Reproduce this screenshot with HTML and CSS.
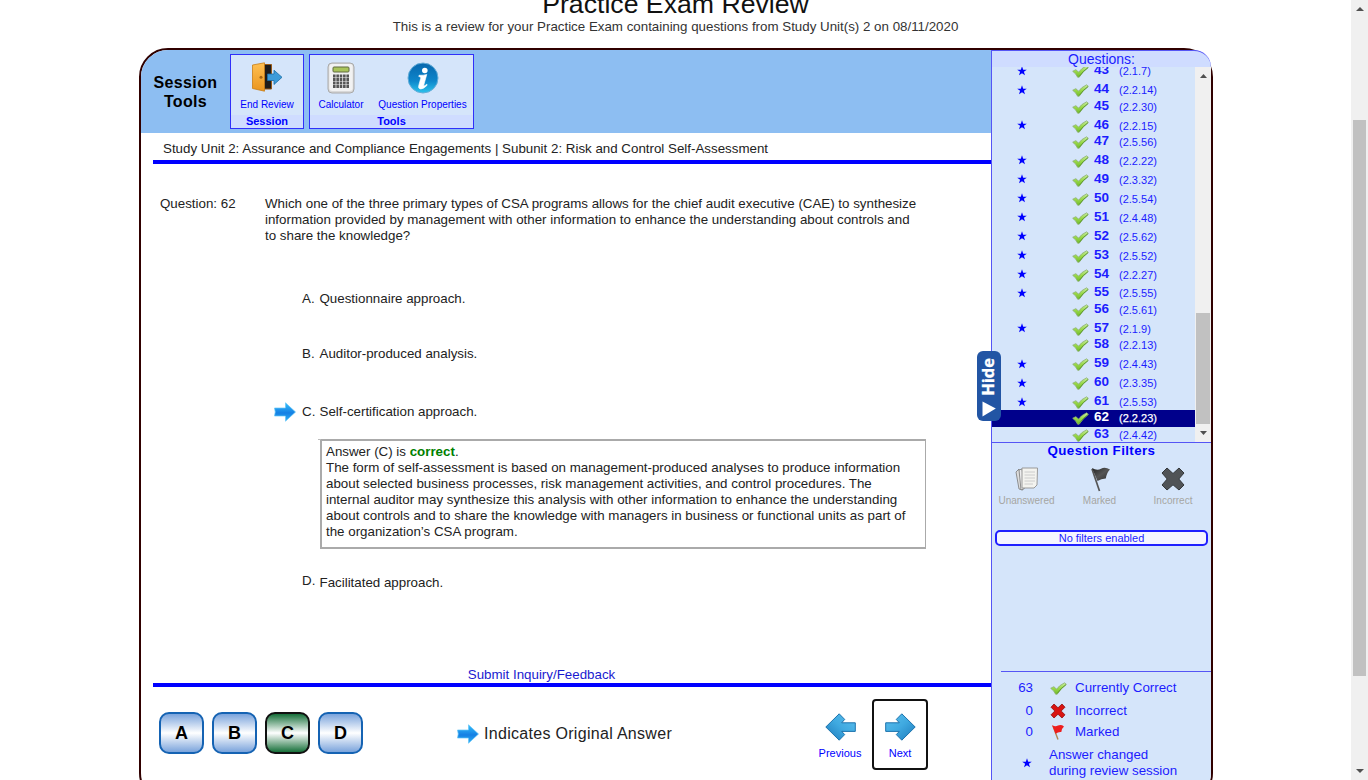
FILE: index.html
```html
<!DOCTYPE html>
<html lang="en">
<head>
<meta charset="utf-8">
<title>Practice Exam Review</title>
<link rel="stylesheet" href="styles.css">
</head>
<body>
<svg class="defs" width="0" height="0" aria-hidden="true">
  <defs>
    <linearGradient id="green" x1="0" y1="0" x2="0" y2="1"><stop offset="0" stop-color="#c8ecA0"/><stop offset=".5" stop-color="#98d848"/><stop offset="1" stop-color="#72bb2c"/></linearGradient>
    <linearGradient id="sky" x1="0" y1="0" x2="0" y2="1"><stop offset="0" stop-color="#35c0fb"/><stop offset=".55" stop-color="#1580e4"/><stop offset="1" stop-color="#2eb0f5"/></linearGradient>
    <linearGradient id="nav" x1="0" y1="0" x2="1" y2="1"><stop offset="0" stop-color="#5cc0ee"/><stop offset=".5" stop-color="#3fa9e0"/><stop offset="1" stop-color="#1c79ba"/></linearGradient>
    <linearGradient id="door" x1="0" y1="0" x2="0" y2="1"><stop offset="0" stop-color="#ffc052"/><stop offset="1" stop-color="#ea951e"/></linearGradient>
    <linearGradient id="info" x1="0" y1="0" x2="0" y2="1"><stop offset="0" stop-color="#0867ad"/><stop offset=".6" stop-color="#0d86cb"/><stop offset="1" stop-color="#2cc3ec"/></linearGradient>
    <linearGradient id="dark" x1="0" y1="0" x2="1" y2="1"><stop offset="0" stop-color="#222"/><stop offset=".5" stop-color="#555"/><stop offset="1" stop-color="#2c2c2c"/></linearGradient>
  </defs>
  <symbol id="check" viewBox="0 0 17 13"><path d="M.7 6.3 3.7 4.7Q5.2 5.4 6.6 7.2 9.4 3.1 14.6.8L16.4 2.4Q11 6.3 7.2 12.2L5.6 12.2Q4 8.5.7 6.3Z" fill="url(#green)" stroke="#8bae72" stroke-width=".8"/><path d="M7.3 11.4Q11 6 16 2.6" stroke="#4d8e20" fill="none" stroke-width=".7"/></symbol>
  <symbol id="star" viewBox="0 0 10 10"><path d="M5 .3 6.2 3.7H9.8L6.9 5.8 8 9.3 5 7.2 2 9.3 3.1 5.8.2 3.7H3.8Z" fill="#00f"/></symbol>
  <symbol id="pointer" viewBox="0 0 22 20"><path d="M.5 6H11.5V.8L21.5 10 11.5 19.2V14H.5Q2 10 .5 6Z" fill="url(#sky)" stroke="#65c6f8" stroke-width=".7"/></symbol>
  <symbol id="arrow" viewBox="0 0 31 28"><path d="M.7 9.8H14.3L11.3 6.4 16.8.8 30.2 14 16.8 27.2 11.3 21.6 14.3 18.4H.7Z" fill="url(#nav)" stroke="#1d73ad"/></symbol>
</svg>
<div class="page">
  <main class="content">
    <h1 class="title">Practice Exam Review</h1>
    <p class="subtitle">This is a review for your Practice Exam containing questions from Study Unit(s) 2 on 08/11/2020</p>
    <div class="frame">
      <section class="exam">
        <header class="toolbar">
          <div class="toolbar-name">Session<br>Tools</div>
          <div class="group group-session">
            <div class="tools">
              <div class="tool">
                <svg width="32" height="30" viewBox="0 0 32 30"><path d="M12 2.5H20.5V27H12Z" fill="#1e1c1b" stroke="#9a5b18"/><path d="M1.5 3 13.5.8V29.2L1.5 26.5Z" fill="url(#door)" stroke="#c87d16" stroke-width=".8"/><circle cx="10" cy="15.3" r="1.5" fill="#a26415"/><path d="M16.5 12H23V8.2L31 15.3 23 22.5V18.5H16.5Z" fill="#3c9bd9" stroke="#1c6da4" stroke-width=".8"/></svg>
                <span>End Review</span>
              </div>
            </div>
            <div class="group-name">Session</div>
          </div>
          <div class="group group-tools">
            <div class="tools">
              <div class="tool tool-calc">
                <svg width="28" height="32" viewBox="0 0 28 32"><rect x="1" y="1" width="26" height="30" rx="4" fill="#d8d8d8" stroke="#aaa"/><rect x="2.3" y="2" width="23.4" height="27" rx="3" fill="#f2f2f2"/><rect x="6" y="5" width="16" height="5" rx="1" fill="#a9c45b" stroke="#606b40"/><path d="M6 14H22M6 17.5H22M6 21H22M6 24.5H22" stroke="#555" stroke-width="2.8" stroke-dasharray="2.6 .75"/></svg>
                <span>Calculator</span>
              </div>
              <div class="tool tool-info">
                <svg width="32" height="32" viewBox="0 0 32 32"><circle cx="16" cy="16" r="15" fill="url(#info)" stroke="#65add8"/><circle cx="17.8" cy="8.5" r="2.8" fill="#fff"/><path d="M12 13.3Q16.5 13.5 19.8 12.4L16.8 23Q16.5 25 19.7 22.3L20.3 23.1Q16.5 27.2 13.7 27 10.9 26.7 11.7 23.7L13.7 16.3Q14.2 14.5 11.8 14.5Z" fill="#fff" stroke="#fff" stroke-width=".6"/></svg>
                <span>Question Properties</span>
              </div>
            </div>
            <div class="group-name">Tools</div>
          </div>
        </header>
        <div class="unit">Study Unit 2: Assurance and Compliance Engagements | Subunit 2: Risk and Control Self-Assessment</div>
        <div class="question">
          <div class="question-no">Question: 62</div>
          <div class="question-text">Which one of the three primary types of CSA programs allows for the chief audit executive (CAE) to synthesize<br>information provided by management with other information to enhance the understanding about controls and<br>to share the knowledge?</div>
        </div>
        <div class="answers">
          <div class="answer a"><i></i><span>A.</span><span>Questionnaire approach.</span></div>
          <div class="answer b"><i></i><span>B.</span><span>Auditor-produced analysis.</span></div>
          <div class="answer c"><svg width="22" height="20"><use href="#pointer"/></svg><span>C.</span><span>Self-certification approach.</span></div>
          <div class="explain">Answer (C) is <b>correct</b>.<br>The form of self-assessment is based on management-produced analyses to produce information<br>about selected business processes, risk management activities, and control procedures. The<br>internal auditor may synthesize this analysis with other information to enhance the understanding<br>about controls and to share the knowledge with managers in business or functional units as part of<br>the organization’s CSA program.</div>
          <div class="answer d"><i></i><span class="letter-d">D.</span><span>Facilitated approach.</span></div>
        </div>
        <div class="feedback"><a>Submit Inquiry/Feedback</a></div>
        <footer class="footer">
          <div class="choices"><div class="choice">A</div><div class="choice">B</div><div class="choice right">C</div><div class="choice">D</div></div>
          <div class="legend-answer"><svg width="22" height="20"><use href="#pointer"/></svg><span>Indicates Original Answer</span></div>
          <div class="nav"><div class="nav-item"><svg class="back" width="31" height="28"><use href="#arrow"/></svg><span>Previous</span></div><div class="nav-item next"><svg width="31" height="28"><use href="#arrow"/></svg><span>Next</span></div></div>
        </footer>
      </section>
      <aside class="side">
        <div class="side-head">Questions:</div>
        <div class="list">
          <div class="rows">
            <div class="row starred"><svg class="s"><use href="#star"/></svg><svg class="k"><use href="#check"/></svg><b>43</b><span>(2.1.7)</span></div>
            <div class="row starred"><svg class="s"><use href="#star"/></svg><svg class="k"><use href="#check"/></svg><b>44</b><span>(2.2.14)</span></div>
            <div class="row"><i></i><svg class="k"><use href="#check"/></svg><b>45</b><span>(2.2.30)</span></div>
            <div class="row starred"><svg class="s"><use href="#star"/></svg><svg class="k"><use href="#check"/></svg><b>46</b><span>(2.2.15)</span></div>
            <div class="row"><i></i><svg class="k"><use href="#check"/></svg><b>47</b><span>(2.5.56)</span></div>
            <div class="row starred"><svg class="s"><use href="#star"/></svg><svg class="k"><use href="#check"/></svg><b>48</b><span>(2.2.22)</span></div>
            <div class="row starred"><svg class="s"><use href="#star"/></svg><svg class="k"><use href="#check"/></svg><b>49</b><span>(2.3.32)</span></div>
            <div class="row starred"><svg class="s"><use href="#star"/></svg><svg class="k"><use href="#check"/></svg><b>50</b><span>(2.5.54)</span></div>
            <div class="row starred"><svg class="s"><use href="#star"/></svg><svg class="k"><use href="#check"/></svg><b>51</b><span>(2.4.48)</span></div>
            <div class="row starred"><svg class="s"><use href="#star"/></svg><svg class="k"><use href="#check"/></svg><b>52</b><span>(2.5.62)</span></div>
            <div class="row starred"><svg class="s"><use href="#star"/></svg><svg class="k"><use href="#check"/></svg><b>53</b><span>(2.5.52)</span></div>
            <div class="row starred"><svg class="s"><use href="#star"/></svg><svg class="k"><use href="#check"/></svg><b>54</b><span>(2.2.27)</span></div>
            <div class="row starred"><svg class="s"><use href="#star"/></svg><svg class="k"><use href="#check"/></svg><b>55</b><span>(2.5.55)</span></div>
            <div class="row"><i></i><svg class="k"><use href="#check"/></svg><b>56</b><span>(2.5.61)</span></div>
            <div class="row starred"><svg class="s"><use href="#star"/></svg><svg class="k"><use href="#check"/></svg><b>57</b><span>(2.1.9)</span></div>
            <div class="row"><i></i><svg class="k"><use href="#check"/></svg><b>58</b><span>(2.2.13)</span></div>
            <div class="row starred"><svg class="s"><use href="#star"/></svg><svg class="k"><use href="#check"/></svg><b>59</b><span>(2.4.43)</span></div>
            <div class="row starred"><svg class="s"><use href="#star"/></svg><svg class="k"><use href="#check"/></svg><b>60</b><span>(2.3.35)</span></div>
            <div class="row starred"><svg class="s"><use href="#star"/></svg><svg class="k"><use href="#check"/></svg><b>61</b><span>(2.5.53)</span></div>
            <div class="row current"><i></i><svg class="k"><use href="#check"/></svg><b>62</b><span>(2.2.23)</span></div>
            <div class="row"><i></i><svg class="k"><use href="#check"/></svg><b>63</b><span>(2.4.42)</span></div>
          </div>
          <div class="bar bar-list"><svg width="7" height="4"><path d="M3.5 0 7 4H0Z" fill="#505050"/></svg><div class="thumb"></div><svg width="7" height="4"><path d="M0 0H7L3.5 4Z" fill="#505050"/></svg></div>
        </div>
        <div class="filters">
          <div class="filters-title">Question Filters</div>
          <div class="filter-row">
            <div class="filter"><svg width="24" height="26" viewBox="0 0 24 26"><path d="M1 6 4 3 8 24 4 23Z" fill="#ddd" stroke="#777" stroke-width=".8"/><path d="M4 4 7 3 10 22 6 24Z" fill="#eee" stroke="#777" stroke-width=".8"/><path d="M7 2H22.5L22 19 19 22H7Z" fill="#f3f3ef" stroke="#999"/><path d="M9.5 6H20M9.5 9H20M9.5 12H20M9.5 15H20M9.5 18H18" stroke="#ccc"/></svg><span>Unanswered</span></div>
            <div class="filter"><svg width="24" height="26" viewBox="0 0 24 26"><path d="M4 3 11.5 25" stroke="#555" stroke-width="1.7"/><path d="M4 2Q9 5 13 2.8T22 3.5Q19 6 17.8 12.5 13.5 12.4 9.5 15Z" fill="url(#dark)"/></svg><span>Marked</span></div>
            <div class="filter"><svg width="24" height="26" viewBox="0 0 24 26"><path d="M6 2 12 7.5 18 2 23 7 17.8 13 23 19 18 24 12 18.8 6 24 1 19 6.2 13 1 7Z" fill="#505356" stroke="#33373a"/></svg><span>Incorrect</span></div>
          </div>
          <div class="filter-state">No filters enabled</div>
        </div>
        <div class="legend">
          <div class="legend-row l1"><em>63</em><svg class="k"><use href="#check"/></svg><span>Currently Correct</span></div>
          <div class="legend-row l2"><em>0</em><svg width="16" height="16" viewBox="0 0 16 16"><path d="M4 1 8 4.8 12 1 15 4.2 11.2 8 15 11.8 12 15 8 11.2 4 15 1 11.8 4.8 8 1 4.2Z" fill="#d91412" stroke="#8f1010" stroke-width=".8"/></svg><span>Incorrect</span></div>
          <div class="legend-row l3"><em>0</em><svg width="16" height="16" viewBox="0 0 16 16"><path d="M3 2 8 15.5" stroke="#b38450" stroke-width="1.4"/><path d="M2 1Q5 3 8 1.6T14 2.5Q12 4 11.3 8 8.4 7.6 5.5 9.8Z" fill="#ed1e1e"/></svg><span>Marked</span></div>
          <div class="legend-row l4"><svg class="s"><use href="#star"/></svg><span>Answer changed<br>during review session</span></div>
        </div>
        <div class="hide"><svg width="14" height="16"><path d="M.5 .5 13.8 7.5 .5 15.5Z" fill="#fff"/></svg><span>Hide</span></div>
      </aside>
    </div>
  </main>
  <div class="bar bar-page"><svg width="8" height="4"><path d="M4 0 8 4H0Z" fill="#505050"/></svg><div class="thumb"></div><svg width="8" height="4"><path d="M0 0H8L4 4Z" fill="#505050"/></svg></div>
</div>
</body>
</html>
```
FILE: styles.css
```css
* { box-sizing: border-box; }
html, body { margin: 0; height: 780px; overflow: hidden; }
body { font: 13.33px/16px "Liberation Sans", Arial, sans-serif; color: #222; background: #fff; }
svg { display: block; flex: none; }
.defs { position: absolute; }
.page { display: flex; height: 780px; overflow: hidden; }
.content { flex: 1; display: flex; flex-direction: column; align-items: center; }
.title { flex: none; margin: -11px 0 0; font-size: 26.67px; line-height: 30px; font-weight: 400; color: #111; white-space: nowrap; }
.subtitle { flex: none; margin: 0; height: 29px; color: #333; white-space: nowrap; }
.frame { flex: none; width: 1074px; height: 754px; display: flex; border: 2px solid #300000; border-radius: 29px; align-self: flex-start; margin-left: 139px; }
.exam { width: 850px; flex: none; }

.toolbar { height: 83px; background: #8dbef2; border-top-left-radius: 27px; display: flex; padding-top: 4px; }
.toolbar-name { width: 89px; padding-top: 19px; font: bold 16px/19px "Liberation Sans", Arial, sans-serif; letter-spacing: .35px; color: #000; text-align: center; }
.group { height: 75px; border: 1px solid #3030fa; background: #d5e5fa; color: #00f; display: flex; flex-direction: column; }
.group-session { width: 74px; margin-right: 5px; }
.group-tools { width: 165px; }
.tools { height: 60px; display: flex; font-size: 10px; line-height: 12px; white-space: nowrap; }
.tool { flex: 1; display: flex; flex-direction: column; align-items: center; justify-content: space-between; padding: 7px 0 4px; }
.tool-calc { flex: 0 0 62px; }
.group-name { flex: 1; background: #cfdcff; font-weight: bold; font-size: 11px; line-height: 13px; text-align: center; }

.unit { margin-left: 12px; padding: 8px 0 0 10px; height: 31px; border-bottom: 4px solid #00f; white-space: nowrap; }
.question { display: flex; padding: 32px 0 0 19px; height: 127px; white-space: nowrap; }
.question-no { width: 105px; }
.answers { height: 371px; padding-left: 133px; white-space: nowrap; }
.answer { display: grid; grid-template-columns: 28px 17.5px 1fr; align-items: center; }
.a { height: 16px; }
.b { margin-top: 39px; height: 16px; }
.c { margin-top: 40px; height: 20px; }
.d { margin-top: 26px; height: 16px; }
.letter-d { margin-top: -5px; }
.explain { position: relative; margin: 17px 0 0 46px; width: 606px; height: 110px; border: 2px solid #aaa; border-right-width: 1px; padding: 3px 0 0 4px; }
.explain::before { content: ""; position: absolute; left: -4px; top: -2px; width: 3px; height: 1px; background: #bbb; }
.explain b { color: #008000; }
.feedback { margin-left: 12px; height: 26px; border-bottom: 4px solid #00f; padding: 6px 61px 0 0; text-align: center; color: #1a1ad0; line-height: 16px; margin-top: -1px; }
.footer { display: flex; height: 93px; padding-left: 18px; }
.choices { display: flex; gap: 8px; padding-top: 25px; width: 298px; }
.choice { width: 45px; height: 42px; border: 2px solid #1563b3; border-radius: 10px; background: linear-gradient(#7ba4dc, #fff 50%, #7ba4dc); color: #000; font: bold 18px/38px "Liberation Sans", Arial, sans-serif; text-align: center; }
.choice.right { border-color: #111; background: linear-gradient(#17703a, #fff 50%, #17703a); }
.legend-answer { display: flex; gap: 5px; padding-top: 37px; width: 352px; font-size: 16px; line-height: 19px; letter-spacing: .3px; }
.nav { display: flex; color: #00f; font-size: 11px; }
.nav-item { width: 62px; margin-top: 12px; height: 71px; display: flex; flex-direction: column; align-items: center; gap: 4px; padding-top: 14px; }
.next { width: 56px; margin-left: 1px; padding-top: 12px; border: 2px solid #111; border-radius: 4px; }
.back { transform: scaleX(-1); }

.side { position: relative; width: 220px; flex: none; border-left: 1px solid #5555f5; background: #d5e5fa; color: #1c1cff; border-radius: 0 27px 27px 0; }
.side-head { height: 17px; background: #cfdcff; border-top: 1px solid #5555f5; border-top-right-radius: 27px; font-size: 14px; line-height: 16px; text-align: center; }
.list { height: 375px; display: flex; overflow: hidden; }
.rows { width: 203px; display: flex; flex-direction: column; justify-content: flex-end; height: 376px; overflow: hidden; flex: none; }
.row { height: 16.4px; flex: none; display: grid; grid-template-columns: 80px 22px 25px 1fr; align-items: center; font-size: 11px; line-height: 16px; }
.row.starred { height: 18.95px; padding-top: 2.5px; }
.row b { font-size: 13.5px; margin-top: -2px; }
.row.current { background: #00008b; color: #fff; }
.current span { -webkit-text-stroke: .25px #fff; }
.s { width: 10px; height: 10px; }
.row .s { margin-left: 25px; margin-top: -1px; }
.k { width: 17px; height: 13px; }
.row .k { margin-top: 1px; }
.bar { background: #f0f0f0; display: flex; flex-direction: column; align-items: center; }
.thumb { background: #c1c1c1; }
.bar-list { width: 16px; padding-top: 7px; }
.bar-list .thumb { width: 14px; height: 111px; margin: 235px 0 7px; }
.bar-page { width: 17px; padding-top: 7px; }
.bar-page .thumb { width: 13px; height: 556px; margin: 109px 0 93px; }

.filters { border-top: 1px solid #5555f5; height: 229px; }
.filters-title { color: #00f; font-weight: bold; text-align: center; line-height: 16px; letter-spacing: .4px; }
.filter-row { display: grid; grid-template-columns: 69px 77px 70px; margin-top: 7px; height: 64px; color: #a6a6a2; font-size: 10px; line-height: 12px; }
.filter { display: flex; flex-direction: column; align-items: center; gap: 3px; }
.filter-state { margin: 0 3px; height: 16px; border: 2px solid #2020ff; border-radius: 5px; background: #f5f5ff; font-size: 11px; line-height: 12px; text-align: center; }
.legend { margin-left: 9px; border-top: 1px solid #5555f5; padding-top: 8px; }
.legend-row { display: grid; grid-template-columns: 32px 16px 1fr; align-items: center; height: 16px; }
.legend-row em { font-style: normal; text-align: right; }
.legend-row svg { margin-left: 17px; }
.legend-row span { margin-left: 26px; white-space: nowrap; }
.l2 { margin-top: 7px; }
.l3 { margin-top: 5px; }
.legend-row.l4 { grid-template-columns: 32px 1fr; height: 32px; margin-top: 7px; }
.l4 .s { margin-left: 21px; }
.l4 span { margin-left: 16px; }
.hide { position: absolute; left: -15px; top: 301px; width: 24px; height: 70px; border-radius: 6px; background: #2255a4; color: #fff; display: flex; flex-direction: column-reverse; align-items: center; gap: 5px; padding: 5px 0 4px; }
.hide span { writing-mode: vertical-rl; transform: rotate(180deg); font: bold 16.5px/22px "Open Sans", sans-serif; margin-left: -3px; -webkit-text-stroke: .3px #fff; }
```
